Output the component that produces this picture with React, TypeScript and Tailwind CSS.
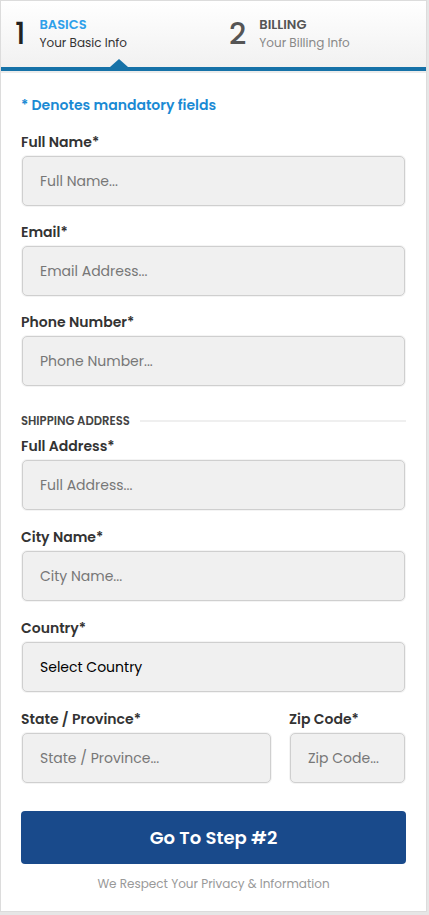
import React from 'react';

const font = { fontFamily: 'Poppins, Inter, "Noto Sans", sans-serif' };

const Field = ({ label, placeholder, className = '' }: { label: string; placeholder: string; className?: string }) => (
  <div className={`flex flex-col shrink-0 ${className}`}>
    <label className="text-[14px] font-semibold text-[#333] leading-[20px] mb-[3px]">{label}</label>
    <div className="rounded-[6px] bg-[#f4f4f4] p-[1px]">
      <input
        placeholder={placeholder}
        className="w-full h-[50px] rounded-[5px] border border-[#cfcfcf] bg-[#f0f0f0] px-[17px] text-[14px] text-[#333] placeholder:text-[#777] outline-none"
      />
    </div>
  </div>
);

export default function App() {
  return (
    <div className="min-h-[915px] bg-[#e6e6e6]" style={font}>
      <div className="w-[427px] h-[912px] bg-white border border-[#dcdcdc] flex flex-col">
        {/* Steps header */}
        <div className="relative h-[66px] shrink-0 bg-gradient-to-b from-white to-[#f1f1f1] flex items-center">
          <div className="flex items-center w-[214px] pl-[14px]">
            <span className="text-[30px] font-medium text-[#222] leading-none mr-[14px]">1</span>
            <div className="flex flex-col leading-[18px]">
              <span className="text-[13px] font-semibold text-[#2ea0ea]">BASICS</span>
              <span className="text-[12px] text-[#333]">Your Basic Info</span>
            </div>
          </div>
          <div className="flex items-center pl-[14px]">
            <span className="text-[30px] font-medium text-[#555] leading-none mr-[13px]">2</span>
            <div className="flex flex-col leading-[18px]">
              <span className="text-[13px] font-semibold text-[#555]">BILLING</span>
              <span className="text-[12px] text-[#888]">Your Billing Info</span>
            </div>
          </div>
          <div className="absolute left-[109px] bottom-0 w-0 h-0 border-l-[9px] border-r-[9px] border-b-[8px] border-l-transparent border-r-transparent border-b-[#1672a8]" />
        </div>
        <div className="h-[4px] shrink-0 bg-[#1672a8]" />
        <div className="h-[2px] shrink-0 bg-[#ececec]" />

        {/* Form */}
        <div className="flex flex-col px-[20px] pt-[22px]">
          <p className="text-[14px] font-semibold text-[#1a8ad4] leading-[20px] mb-[17px]">* Denotes mandatory fields</p>
          <div className="flex flex-col gap-[15px]">
            <Field label="Full Name*" placeholder="Full Name..." />
            <Field label="Email*" placeholder="Email Address..." />
            <Field label="Phone Number*" placeholder="Phone Number..." />
          </div>
          <div className="flex items-center gap-[10px] mt-[26px] mb-[7px]">
            <span className="text-[11.6px] leading-[16px] font-semibold text-[#444] uppercase">Shipping Address</span>
            <div className="flex-1 h-[2px] bg-[#efefef]" />
          </div>
          <div className="flex flex-col gap-[16px]">
            <Field label="Full Address*" placeholder="Full Address..." />
            <Field label="City Name*" placeholder="City Name..." />
            <div className="flex flex-col">
              <label className="text-[14px] font-semibold text-[#333] leading-[20px] mb-[3px]">Country*</label>
              <div className="rounded-[6px] bg-[#f4f4f4] p-[1px]">
                <div className="h-[50px] rounded-[5px] border border-[#cfcfcf] bg-[#f0f0f0] px-[17px] flex items-center text-[14px] text-black">
                  Select Country
                </div>
              </div>
            </div>
            <div className="flex gap-[17px]">
              <Field label="State / Province*" placeholder="State / Province..." className="flex-1" />
              <Field label="Zip Code*" placeholder="Zip Code..." className="w-[117px]" />
            </div>
          </div>
          <button className="mt-[27px] h-[53px] w-full rounded-[4px] bg-[#194a8b] text-white text-[18px] font-semibold">
            Go To Step #2
          </button>
          <p className="mt-[11px] text-center text-[12px] leading-[18px] text-[#999]">We Respect Your Privacy &amp; Information</p>
        </div>
      </div>
    </div>
  );
}
